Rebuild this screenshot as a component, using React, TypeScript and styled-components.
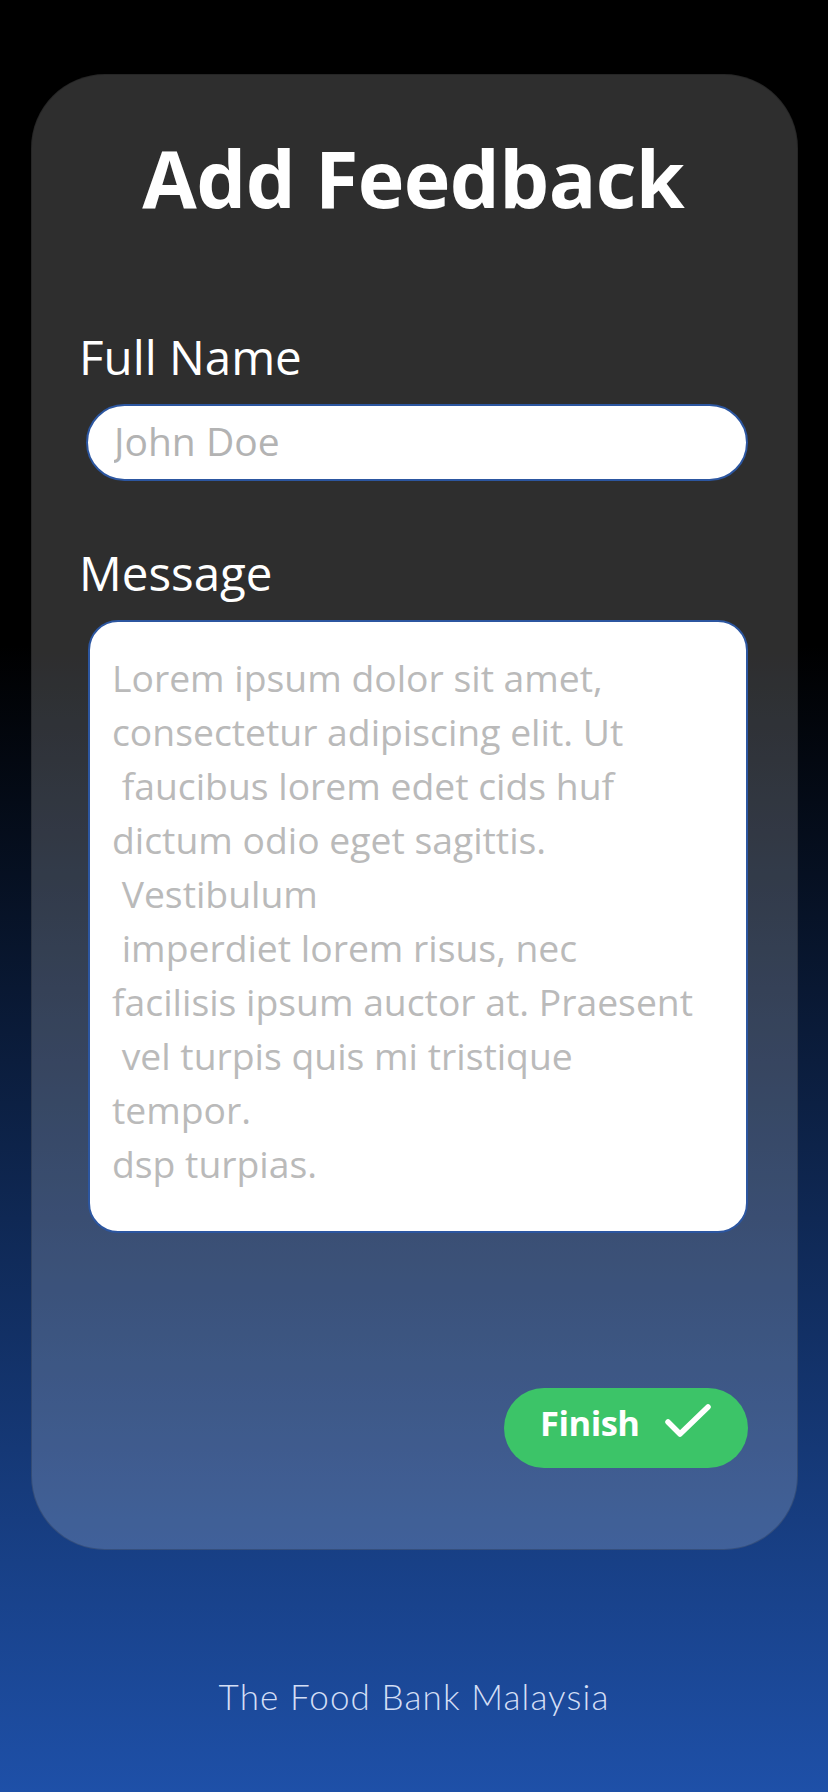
import React from "react";
import styled, { createGlobalStyle } from "styled-components";

const GlobalStyle = createGlobalStyle`
  html, body {
    margin: 0;
    padding: 0;
    background: #000;
  }
  * { box-sizing: border-box; }
`;

const Page = styled.div`
  min-height: 1792px;
  display: flex;
  flex-direction: column;
  align-items: center;
  padding-top: 74px;
  background: linear-gradient(180deg, #000 36%, #1e50a8 100%);
  font-family: "Open Sans", "Noto Sans", sans-serif;
`;

const Card = styled.section`
  width: 767px;
  height: 1476px;
  margin-left: 1px;
  display: flex;
  flex-direction: column;
  background: rgba(255, 255, 255, 0.18);
  border: 1.5px solid rgba(0, 0, 0, 0.18);
  border-radius: 74px;
  padding: 64px 49.5px 84px 47px;
`;

const Title = styled.h1`
  margin: 0;
  text-align: center;
  color: #fff;
  font-size: 79px;
  line-height: 78px;
  font-weight: 700;
  letter-spacing: -0.6px;
`;

const Form = styled.form`
  display: flex;
  flex-direction: column;
  margin-top: 112px;
  flex: 1;
`;

const Label = styled.label<{ $top?: number }>`
  display: block;
  color: #fff;
  font-size: 47.5px;
  line-height: 56px;
  font-weight: 400;
  margin-top: ${(p) => p.$top ?? 0}px;
  margin-bottom: 19px;
`;

const TextInput = styled.input`
  display: block;
  margin-left: 7px;
  width: calc(100% - 7px);
  height: 77px;
  border: 2px solid #2c56a0;
  border-radius: 40px;
  background: #fff;
  padding: 0 26px 4px;
  font-family: "Open Sans", "Noto Sans", sans-serif;
  font-size: 39px;
  color: #333;
  outline: none;
  &::placeholder { color: #b3b3b3; }
`;

const MessageArea = styled.textarea`
  display: block;
  margin-left: 9px;
  width: calc(100% - 9px);
  height: 613px;
  border: 2px solid #2c56a0;
  border-radius: 30px;
  background: #fff;
  padding: 29px 6px 30px 22px;
  font-family: "Open Sans", "Noto Sans", sans-serif;
  font-size: 37.3px;
  line-height: 54px;
  color: #333;
  resize: none;
  overflow: hidden;
  white-space: pre;
  outline: none;
  &::placeholder { color: #bababa; }
`;

const ButtonRow = styled.div`
  display: flex;
  justify-content: flex-end;
  margin-top: 155px;
`;

const FinishButton = styled.button`
  display: inline-flex;
  align-items: center;
  gap: 25px;
  height: 80px;
  padding: 0 37px 12px 36px;
  border: none;
  border-radius: 40px;
  background: #3cc468;
  color: #fff;
  font-family: "Open Sans", "Noto Sans", sans-serif;
  font-size: 34.5px;
  font-weight: 700;
  letter-spacing: -0.5px;
  cursor: pointer;
`;

const Footer = styled.footer`
  margin-top: 125px;
  color: #d3def5;
  font-family: Lato, "Open Sans", sans-serif;
  font-weight: 300;
  font-size: 35px;
  line-height: 42px;
  letter-spacing: 1.1px;
  text-align: center;
`;

const CheckIcon = () => (
  <svg width="46" height="36" viewBox="0 0 46 36" fill="none">
    <polyline
      points="3,18 15,30 43,3"
      stroke="#fff"
      strokeWidth="5.5"
      strokeLinecap="round"
      strokeLinejoin="round"
    />
  </svg>
);

const messagePlaceholder =
  "Lorem ipsum dolor sit amet,\nconsectetur adipiscing elit. Ut\n faucibus lorem edet cids huf\ndictum odio eget sagittis.\n Vestibulum\n imperdiet lorem risus, nec\nfacilisis ipsum auctor at. Praesent\n vel turpis quis mi tristique\ntempor.\ndsp turpias.";

export default function App() {
  return (
    <>
      <GlobalStyle />
      <Page>
        <Card>
          <Title>Add Feedback</Title>
          <Form onSubmit={(e) => e.preventDefault()}>
            <Label htmlFor="name">Full Name</Label>
            <TextInput id="name" placeholder="John Doe" />
            <Label htmlFor="msg" $top={64}>Message</Label>
            <MessageArea id="msg" placeholder={messagePlaceholder} />
            <ButtonRow>
              <FinishButton type="submit">
                Finish
                <CheckIcon />
              </FinishButton>
            </ButtonRow>
          </Form>
        </Card>
        <Footer>The Food Bank Malaysia</Footer>
      </Page>
    </>
  );
}
